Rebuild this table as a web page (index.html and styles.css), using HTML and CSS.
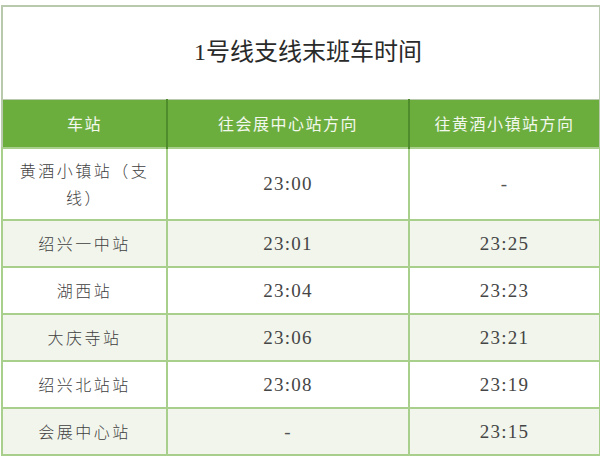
FILE: index.html
```
<!DOCTYPE html>
<html lang="zh-CN">
<head>
<meta charset="utf-8">
<title>1号线支线末班车时间</title>
<link rel="stylesheet" href="styles.css">
</head>
<body>
<table class="timetable">
  <colgroup>
    <col class="c1"><col class="c2"><col class="c3">
  </colgroup>
  <tr class="title-row"><th colspan="3" class="title">1号线支线末班车时间</th></tr>
  <tr class="head-row">
    <th>车站</th><th>往会展中心站方向</th><th>往黄酒小镇站方向</th>
  </tr>
  <tr class="row tall"><td class="st">黄酒小镇站（支<br>线）</td><td class="tm">23:00</td><td class="tm dash">-</td></tr>
  <tr class="row alt"><td class="st">绍兴一中站</td><td class="tm">23:01</td><td class="tm">23:25</td></tr>
  <tr class="row"><td class="st">湖西站</td><td class="tm">23:04</td><td class="tm">23:23</td></tr>
  <tr class="row alt"><td class="st">大庆寺站</td><td class="tm">23:06</td><td class="tm">23:21</td></tr>
  <tr class="row"><td class="st">绍兴北站站</td><td class="tm">23:08</td><td class="tm">23:19</td></tr>
  <tr class="row alt"><td class="st">会展中心站</td><td class="tm dash">-</td><td class="tm">23:15</td></tr>
</table>
</body>
</html>
```
FILE: styles.css
```
html, body {
  margin: 0;
  padding: 0;
  background: #ffffff;
}
body {
  padding: 5px 0 0 1px;
  font-family: "Liberation Serif", "Noto Sans CJK SC", serif;
  color: #3a3a3a;
}
.timetable {
  border-collapse: collapse;
  width: 598px;
  table-layout: fixed;
  border: 2px solid #b9c9ad;
}
.c1 { width: 165px; }
.c2 { width: 242px; }
.c3 { width: 191px; }
.title-row { height: 93px; }
.title {
  font-family: "Liberation Serif", "Noto Sans CJK SC", serif;
  font-weight: 400;
  font-size: 24px;
  color: #2a2a2a;
  text-align: center;
  padding: 0 0 6px 14px;
  background: #ffffff;
  border-bottom: 1px solid #b9c9ad;
}
.head-row { height: 49px; }
.head-row th {
  background: #6cae3e;
  color: #f3f8ee;
  font-family: "Noto Sans CJK SC", sans-serif;
  font-weight: 400;
  font-size: 16px;
  letter-spacing: 1.5px;
  text-align: center;
  padding: 0;
  border-left: 2px solid #4f8c2c;
  border-right: 2px solid #4f8c2c;
}
.head-row th:first-child { border-left: none; }
.head-row th:last-child { border-right: none; }
.row { height: 47px; }
.row.tall { height: 72px; }
.row td {
  border: 2px solid #a9cf8c;
  text-align: center;
  padding: 0;
  background: #ffffff;
}
.row.alt td { background: #f1f5ec; }
.st {
  font-family: "Noto Sans CJK SC", sans-serif;
  font-weight: 300;
  font-size: 16px;
  letter-spacing: 2.5px;
  line-height: 27px;
  color: #3f3f3f;
}
.tm {
  font-family: "Liberation Serif", "Times New Roman", serif;
  font-weight: 400;
  font-size: 19px;
  letter-spacing: 1.2px;
  color: #454545;
}
.dash { color: #555555; }
```
